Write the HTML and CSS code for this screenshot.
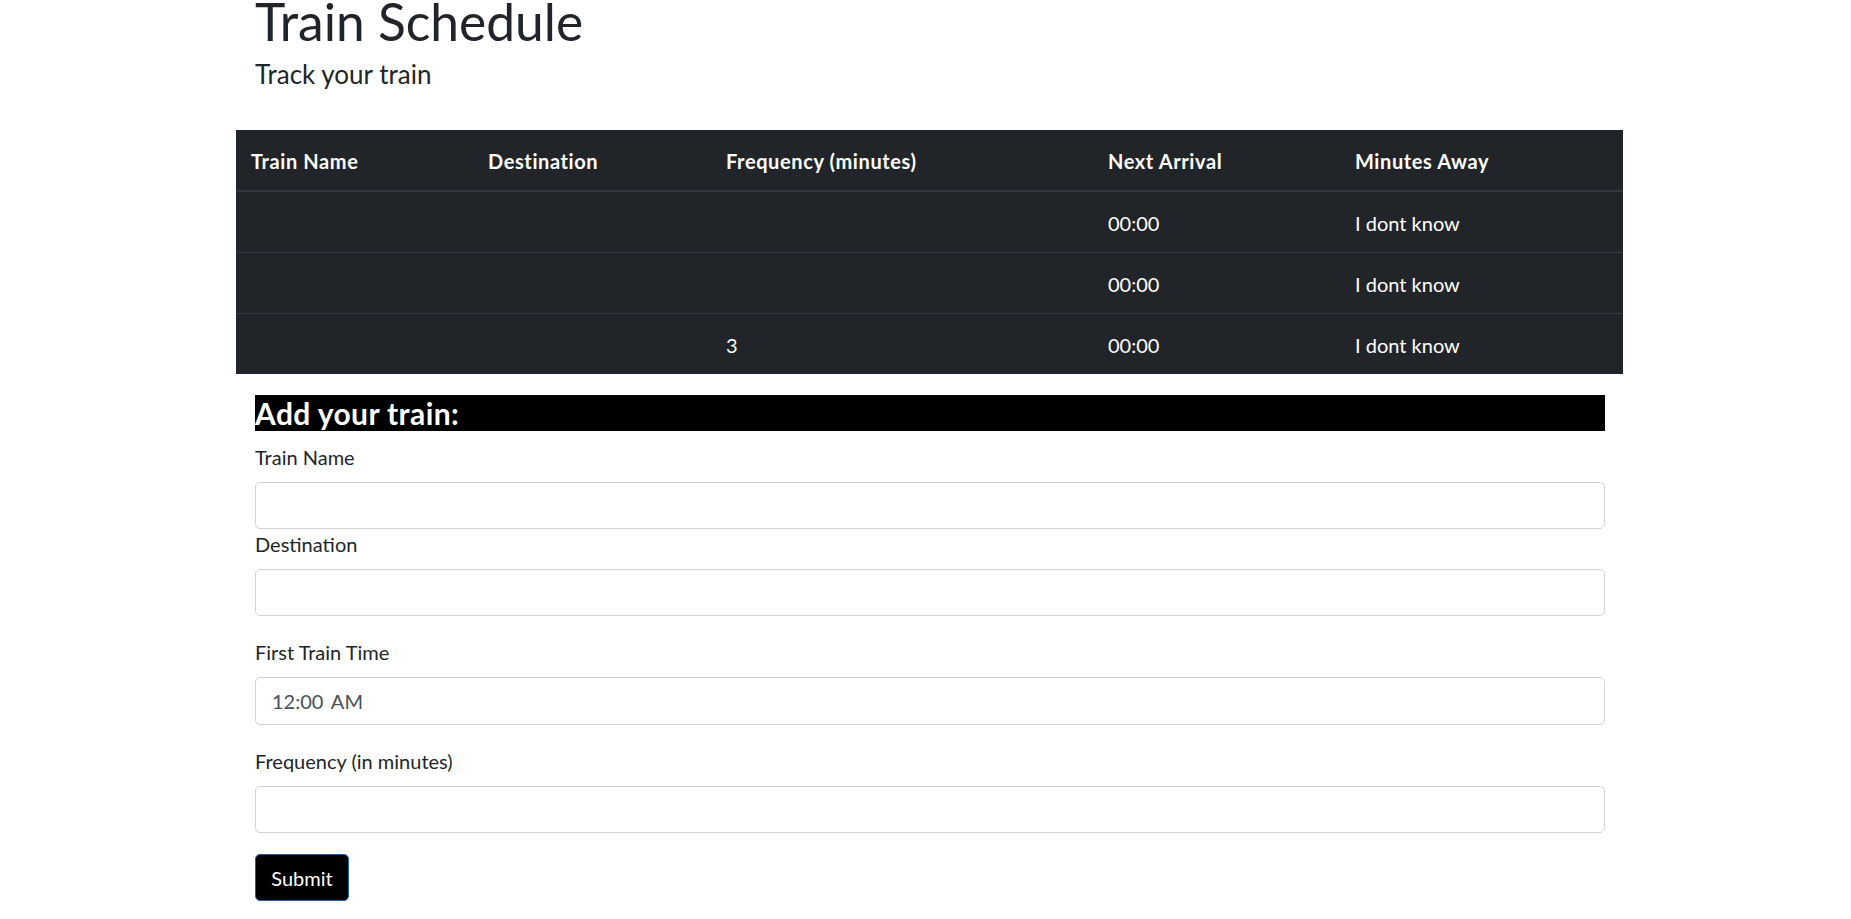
FILE: index.html
```html
<!DOCTYPE html>
<html lang="en">
<head>
<meta charset="utf-8">
<title>Train Schedule</title>
<link rel="stylesheet" href="styles.css">
</head>
<body>
<div class="page">
  <header class="intro">
    <h1 class="title">Train Schedule</h1>
    <h5 class="subtitle">Track your train</h5>
  </header>

  <table class="schedule">
    <thead>
      <tr>
        <th class="c-name">Train Name</th>
        <th class="c-dest">Destination</th>
        <th class="c-freq">Frequency (minutes)</th>
        <th class="c-next">Next Arrival</th>
        <th class="c-away">Minutes Away</th>
      </tr>
    </thead>
    <tbody>
      <tr><td></td><td></td><td></td><td>00:00</td><td>I dont know</td></tr>
      <tr><td></td><td></td><td></td><td>00:00</td><td>I dont know</td></tr>
      <tr><td></td><td></td><td>3</td><td>00:00</td><td>I dont know</td></tr>
    </tbody>
  </table>

  <form class="add-form">
    <h4 class="form-title">Add your train:</h4>
    <div class="field">
      <label class="label" for="name">Train Name</label>
      <input class="control" id="name" type="text">
    </div>
    <div class="field spaced">
      <label class="label" for="dest">Destination</label>
      <input class="control" id="dest" type="text">
    </div>
    <div class="field spaced">
      <label class="label" for="time">First Train Time</label>
      <input class="control time" id="time" type="text" value="12:00 AM">
    </div>
    <div class="field spaced">
      <label class="label" for="freq">Frequency (in minutes)</label>
      <input class="control" id="freq" type="text">
    </div>
    <button class="submit" type="button">Submit</button>
  </form>
</div>
</body>
</html>
```

FILE: styles.css
```css
html, body {
  margin: 0;
  padding: 0;
  background: #fff;
}

body {
  font-family: Lato, "Open Sans", sans-serif;
  font-size: 20px;
  line-height: 1.5;
  color: #212529;
}

.page {
  width: 1387px;
  margin-left: 236px;
}

.intro {
  padding: 0 19px;
}

.title {
  margin: 0 0 17px;
  font-size: 51.5px;
  font-weight: 400;
  line-height: 42px;
}

.subtitle {
  margin: 0 0 40px;
  font-size: 26px;
  font-weight: 400;
  line-height: 31px;
}

.schedule {
  width: 100%;
  border-collapse: collapse;
  background: #212529;
  color: #fff;
}

.schedule th,
.schedule td {
  padding: 16px 15px 14px;
  text-align: left;
  vertical-align: top;
  border-top: 1px solid #32383e;
  line-height: 30px;
  height: 30px;
}

.schedule th {
  font-weight: 700;
  letter-spacing: 0.6px;
  border-bottom: 2px solid #32383e;
  border-top: 0;
}

.c-name { width: 207px; }
.c-dest { width: 208px; }
.c-freq { width: 352px; }
.c-next { width: 217px; }

.add-form {
  padding: 21px 18px 0 19px;
}

.form-title {
  margin: 0 0 11px;
  background: #000;
  color: #fff;
  font-size: 30px;
  font-weight: 700;
  letter-spacing: 0.4px;
  line-height: 36px;
}

.field.spaced {
  margin-bottom: 21px;
}

.label {
  display: block;
  margin-bottom: 10px;
  line-height: 30px;
}

.control {
  display: block;
  box-sizing: border-box;
  width: 100%;
  height: 47px;
  padding: 7px 15px;
  font-family: inherit;
  font-size: 20px;
  color: #495057;
  background: #fff;
  border: 1px solid #ced4da;
  border-radius: 5px;
}

.control.time {
  height: 48px;
  padding-left: 16px;
  word-spacing: 3px;
}

.submit {
  display: block;
  box-sizing: border-box;
  width: 94px;
  height: 47px;
  padding: 0 15px;
  font-family: inherit;
  font-size: 20px;
  color: #fff;
  background: #000;
  border: 1px solid #1f5fa8;
  border-radius: 5px;
}
```
